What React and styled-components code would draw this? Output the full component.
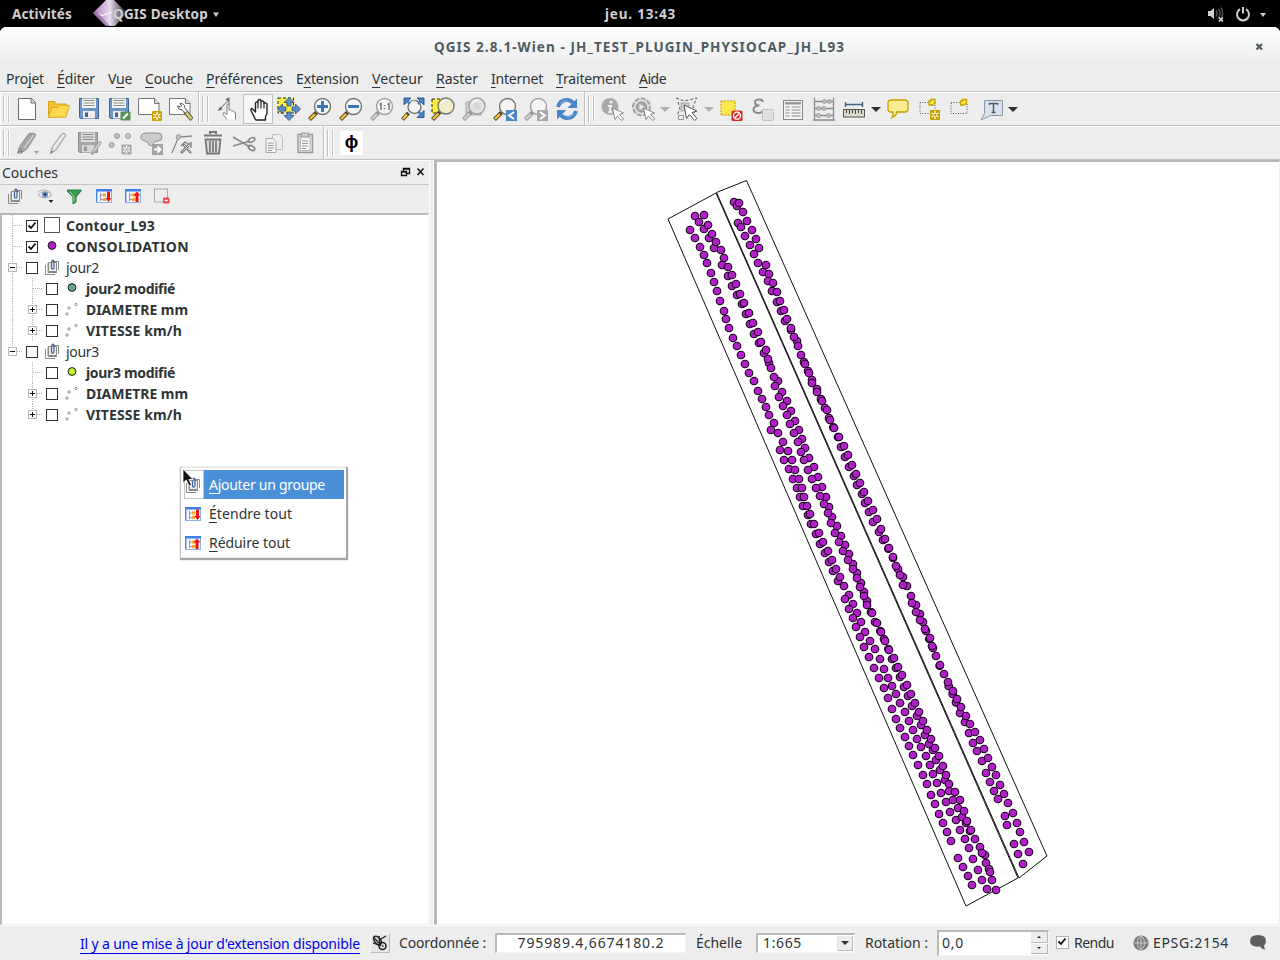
import React, { useLayoutEffect, useRef } from "react";
import styled, { createGlobalStyle } from "styled-components";

const GlobalStyle = createGlobalStyle`
  * { box-sizing: border-box; }
  body { margin: 0; background: #000; overflow: hidden; }
  svg { display: block; flex: none; }
`;

const Desktop = styled.div`
  position: relative;
  width: 1280px;
  height: 960px;
  display: flex;
  flex-direction: column;
  background: #000;
  color: #2e3436;
  font: 14px/20px "Noto Sans", "Open Sans", sans-serif;
  cursor: default;
`;

/* ---------- text ---------- */

const LabelBox = styled.span`
  display: inline-block;
  flex: none;
  justify-self: start;
  white-space: pre;
  font-weight: ${(p) => (p.$bold ? 700 : 400)};
  font-size: ${(p) => p.$size || 14}px;
`;

const Mnemonic = styled.span`
  text-decoration: underline;
  text-decoration-thickness: 1px;
  text-underline-offset: 3px;
  text-decoration-skip-ink: none;
`;

/* Text tracked to an exact width; "&" marks the mnemonic letter. */
function Label({ text, w, bold, size }) {
  const ref = useRef(null);
  useLayoutEffect(() => {
    const el = ref.current;
    el.style.letterSpacing = "0px";
    const natural = el.getBoundingClientRect().width;
    el.style.letterSpacing = `${(w - natural) / text.replace("&", "").length}px`;
  }, [text, w]);
  const i = text.indexOf("&");
  return (
    <LabelBox ref={ref} $bold={bold} $size={size}>
      {i < 0 ? text : (
        <>
          {text.slice(0, i)}
          <Mnemonic>{text[i + 1]}</Mnemonic>
          {text.slice(i + 2)}
        </>
      )}
    </LabelBox>
  );
}

/* ---------- shell top bar and window frame ---------- */

const TopBar = styled.header`
  height: 27px;
  flex: none;
  display: grid;
  grid-template-columns: 605px 1fr auto;
  align-items: center;
  color: #d0d0d0;
  padding: 0 13px 0 0;
`;
const TopLeft = styled.div`
  display: flex;
  align-items: center;
  padding-left: 12px;
  height: 27px;
`;
const AppName = styled.div`
  display: flex;
  align-items: center;
  margin-left: 20px;
  height: 27px;
`;
const AppText = styled.div`
  display: flex;
  align-items: center;
  gap: 4px;
  margin-left: -19px;
  position: relative;
`;
const TopRight = styled.div`
  display: flex;
  align-items: center;
  gap: 8px;
`;
const Win = styled.main`
  flex: 1;
  min-height: 0;
  display: flex;
  flex-direction: column;
  background: #ededed;
  border-radius: 6px 6px 0 0;
  overflow: hidden;
`;
const TitleBar = styled.div`
  height: 40px;
  flex: none;
  display: grid;
  grid-template-columns: 434px 1fr 25px;
  align-items: center;
  color: #4c5c62;
  background: linear-gradient(#fefefe, #ededed 36px);
`;
const MenuBar = styled.nav`
  height: 24px;
  flex: none;
  display: flex;
  align-items: center;
  gap: 13px;
  padding: 0 6px;
`;

/* ---------- tool bars ---------- */

const ToolRow = styled.div`
  height: 34px;
  flex: none;
  display: flex;
  border-top: 1px solid #c0c0c0;
  box-shadow: inset 0 1px #fff;
`;
const ToolGroup = styled.div`
  display: flex;
  align-items: center;
  padding: 1px ${(p) => p.$end || 0}px 0 3px;
  border-right: ${(p) => (p.$last ? "0" : "1px solid #c0c0c0")};
  box-shadow: inset 1px 1px #fff;
`;
const Grip = styled.div`
  width: 6px;
  height: 26px;
  margin-right: ${(p) => p.$gap || 2}px;
  border: solid #c2c2c2;
  border-width: 0 1px;
  box-shadow: inset 1px 0 #fff, inset -1px 0 #f8f8f8, 1px 0 #fff;
`;
const ToolButton = styled.div`
  width: ${(p) => (p.$menu ? 44 : 30.8)}px;
  height: 30px;
  display: flex;
  align-items: center;
  padding-left: 3px;
  gap: 5px;
  border: 1px solid ${(p) => (p.$on ? "#c0c0c0" : "transparent")};
  background: ${(p) => (p.$on ? "#f7f7f7" : "none")};
`;
const Arrow = styled.i`
  border: 5px solid transparent;
  border-top-color: ${(p) => (p.$off ? "#b0b0b0" : "#2b2f31")};
  border-bottom: 0;
`;
const PhiButton = styled.div`
  width: 23px;
  height: 24px;
  background: #fff;
  color: #000;
  font: 700 18px/23px "Liberation Sans", sans-serif;
  text-align: center;
`;

/* ---------- body ---------- */

const Body = styled.div`
  flex: 1;
  min-height: 0;
  display: flex;
  border-top: 1px solid #c0c0c0;
`;
const Dock = styled.section`
  width: 429px;
  display: flex;
  flex-direction: column;
  border-top: 1px solid #fff;
`;
const DockTitle = styled.div`
  height: 24px;
  flex: none;
  display: flex;
  align-items: center;
  padding: 0 3px 0 2px;
  gap: 4px;
  border-bottom: 1px solid #c4c4c4;
`;
const Spacer = styled.div`flex: 1;`;
const DockTools = styled.div`
  height: 28px;
  flex: none;
  display: flex;
  align-items: center;
  gap: 13px;
  padding: 0 7px 7px;
`;
const Tree = styled.div`
  flex: 1;
  background: #fff;
  border: 1px solid #f2f2f2;
  border-left: 2px solid #b8b8b8;
  border-top: 2px solid #b8b8b8;
`;
const TreeRow = styled.div`
  height: 21px;
  display: flex;
  align-items: center;
`;
const Branch = styled.div`
  width: 20px;
  height: 21px;
  flex: none;
`;
const Check = styled.div`
  width: 12px;
  height: 12px;
  flex: none;
  margin: 0 6px 0 4px;
  border: 1px solid #2b2f31;
  background: #fff;
`;
const Symbol = styled.div`
  width: 16px;
  height: 21px;
  display: flex;
  align-items: center;
  justify-content: center;
  margin-right: 6px;
  padding-bottom: 1px;
`;
const Splitter = styled.div`
  width: 5px;
  background: linear-gradient(90deg, #fff 1px, #ededed 1px 4px, #fff 4px);
`;
const MapFrame = styled.section`
  flex: 1;
  background: #fff;
  border: 1px solid #f0f0f0;
  border-left: 3px solid #b8b8b8;
  border-top: 2px solid #b8b8b8;
`;

/* ---------- status bar ---------- */

const StatusBar = styled.footer`
  height: 35px;
  flex: none;
  display: flex;
  align-items: center;
  padding: 0 14px 1px 80px;
  border-top: 1px solid #fff;
`;
const Link = styled.a`
  color: #0000f0;
  height: 20px;
  line-height: 19px;
  border-bottom: 1px solid #0000f0;
  margin: 2px 10px 0 0;
`;
const ToggleButton = styled.div`
  width: 20px;
  height: 20px;
  margin-right: 9px;
  background: #e4e4e4;
  border: 1px solid #fafafa;
  border-right-color: #bbb;
  border-bottom-color: #bbb;
`;
const Field = styled.div`
  width: ${(p) => p.$w}px;
  height: ${(p) => p.$h || 20}px;
  margin: 0 ${(p) => p.$mr}px 0 ${(p) => p.$ml}px;
  display: flex;
  align-items: center;
  justify-content: ${(p) => (p.$center ? "center" : "space-between")};
  padding-left: ${(p) => (p.$center ? 0 : p.$pad)}px;
  background: #fff;
  border: 2px solid #b8b8b8;
  border-right: 1px solid #f5f5f5;
  border-bottom: 1px solid #f5f5f5;
`;
const ComboKnob = styled.div`
  width: 15px;
  height: 15px;
  margin-right: 1px;
  display: flex;
  align-items: center;
  justify-content: center;
  background: #ededed;
  border: solid #b8b8b8;
  border-width: 0 1px 1px 0;
  box-shadow: -1px 0 #e0e0e0;

  ${Arrow} {
    border-width: 4px;
    border-bottom: 0;
  }
`;
const Spin = styled.div`
  width: 17px;
  height: 22px;
  display: grid;
  grid-template-rows: 1fr 1fr;
  gap: 1px;
`;
const SpinKnob = styled.div`
  display: flex;
  align-items: center;
  justify-content: center;
  background: #ededed;
  border: solid #b8b8b8;
  border-width: 0 1px 1px 0;
`;
const Tick = styled.i`
  border: 2px solid transparent;
  border-${(p) => (p.$up ? "bottom" : "top")}-color: #222;
  border-${(p) => (p.$up ? "top" : "bottom")}: 0;
`;
const StatusCheck = styled.div`
  width: 13px;
  height: 13px;
  margin-right: 5px;
  background: #fff;
  border: 1px solid #b0b0b0;
`;
const Gap = styled.div`width: ${(p) => p.$w}px; flex: none;`;

/* ---------- context menu ---------- */

const Popup = styled.div`
  position: absolute;
  left: 180px;
  top: 467px;
  width: 166px;
  height: 91px;
  padding: 2px 2px 3px 3px;
  background: #fff;
  border: 1px solid #e6e6e6;
  border-left-color: #c4c4c4;
  border-right: 0;
  box-shadow: 1px 1px 1px 1px rgba(0, 0, 0, 0.35);
`;
const PopupItem = styled.div`
  height: 29px;
  width: 160px;
  display: flex;
  align-items: center;
  color: ${(p) => (p.$on ? "#fff" : "inherit")};
`;
const PopupIcon = styled.div`
  width: 20px;
  height: 29px;
  display: flex;
  align-items: center;
  justify-content: center;
  padding-right: 2px;
  background: #fff;
  border: 1px solid ${(p) => (p.$on ? "#c4c4c4" : "transparent")};
`;
const PopupText = styled.div`
  flex: 1;
  height: 29px;
  line-height: 29px;
  padding-left: 5px;
  background: ${(p) => (p.$on ? "#4a90d9" : "none")};
`;
const Pointer = styled.svg`
  position: absolute;
  left: 182px;
  top: 468px;
`;

/* ---------- icons ---------- */

const Ico = ({ s = 24, children }) => (
  <svg width={s} height={s} viewBox={`0 0 ${s} ${s}`} fill="none">{children}</svg>
);
const Lens = ({ off, cx = 14.5, cy = 9.5, r = 8, fill = "#f4f4f2", children }) => (
  <Ico>
    {children && children[0]}
    <path d={`M${cx - 6} ${cy + 6}L1.5 22.5`} stroke={off ? "#8e8e8e" : "#4a4030"} strokeWidth="4" />
    <path d={`M${cx - 7.5} ${cy + 7.5}L2 22`} stroke={off ? "#d4d4d4" : "#fcc42c"} strokeWidth="2.4" />
    <circle cx={cx} cy={cy} r={r} fill={fill} stroke={off ? "#a0a0a0" : "#77776f"} strokeWidth="1.4" />
    <path d={`M${cx - 5} ${cy - 2}q2-4 6-4`} stroke="#fff" strokeWidth="1.2" />
    {children && children[1]}
  </Ico>
);
const Page = () => <path d="M3.500 1.500h13l4 4v17h-17z" fill="#fff" stroke="#6a6a6a" />;
const Star = ({ x, y, off }) => (
  <g transform={`translate(${x} ${y})`}>
    <rect width="10" height="10" rx="1" fill={off ? "#a8a8a8" : "#c9a100"} />
    <path d="M5 1v8M1.500 3l7 4M8.500 3l-7 4" stroke="#fff" strokeWidth="1.4" />
    <circle cx="5" cy="5" r="1.300" fill={off ? "#a8a8a8" : "#c9a100"} />
  </g>
);
const Disk = ({ off }) => (
  <g>
    <path d="M2.500 1.500h19v20h-18l-1-1z" fill={off ? "#a8a8a8" : "#6c96c8"} stroke={off ? "#8f8f8f" : "#3d6496"} />
    <rect x="5" y="1.500" width="14" height="9.500" fill={off ? "#ddd" : "#f6f6f3"} />
    <path d="M6.500 3.500h11M6.500 6h11M6.500 8.500h11" stroke="#8c8c88" />
    <rect x="6" y="14" width="12" height="7.500" fill={off ? "#d5d5d5" : "#eee"} />
    <rect x="8" y="15.500" width="3" height="4.500" fill={off ? "#999" : "#3d6496"} />
  </g>
);
const HAND = "M7.500 22L3.500 14Q2 11.500 4 11L7.500 14.500V5.500Q8.500 3.500 10 5V3Q11.500 1 13 3V4Q14.500 2.500 16 4.500V6Q17.500 4.500 19 6.500V16L17.500 19V22.500H8z";
const Cursor = ({ x, y }) => (
  <path transform={`translate(${x} ${y})`} d="M0 0l11 5-4 1.500 4 4.500-2 1.500-4-4.500-2.500 3.500z" fill="#fff" stroke="#8a8a8a" strokeLinejoin="round" />
);
const Pencil = ({ x = 0, y = 0, k = 1, fill = "#ccc" }) => (
  <g transform={`translate(${x} ${y}) scale(${k})`}>
    <path d="M5.500 22.500l2-7L17 2.500q2-1.500 4 1.500L11.500 18.500z" fill={fill} stroke="#969696" strokeLinejoin="round" />
    <path d="M9 17L18.500 4" stroke="#fff" opacity=".7" />
    <path d="M5.500 22.500l1-3 1.800 1.500z" fill="#777" />
  </g>
);
const Circ = ({ p, r = 2.5 }) => p.map(([x, y]) => <circle key={x + "," + y} cx={x} cy={y} r={r} fill="#c4c4c4" stroke="#999" />);

const I = {
  new: <Ico><Page /><path d="M16 1.500v4.500h4.500" fill="#ddd" stroke="#6a6a6a" /></Ico>,
  open: <Ico><path d="M2.500 21V4.500h6l2 2.500h10V11" fill="#f3c22f" stroke="#d1a11e" /><path d="M2 20.500L6 10.500h6l2-2.500 9.500.5L20 20z" fill="#fcd94f" stroke="#d9ab25" strokeLinejoin="round" /></Ico>,
  save: <Ico><Disk /></Ico>,
  saveAs: <Ico><Disk /><rect x="13.500" y="14.500" width="10" height="9" rx="1" fill="#569353" /><path d="M16 21.500l5-5" stroke="#fff" strokeWidth="2" /></Ico>,
  composer: <Ico><path d="M.5 1.500h16l4.500 4.500V17.500H.5z" fill="#fff" stroke="#777" /><path d="M16.500 1.500v5h5" fill="#ddd" stroke="#777" /><Star x={14} y={14} /></Ico>,
  manager: <Ico><path d="M.5 1.500h16l4.500 4.500V17.500H.5z" fill="#fff" stroke="#777" /><path d="M16.500 1.500v5h5" fill="#ddd" stroke="#777" /><path d="M16 14l7 8.500" stroke="#5a5433" strokeWidth="4.500" /><path d="M16.500 14.500l6 7.500" stroke="#e3d37a" strokeWidth="2.500" /><path d="M11 6.500q5 0 4.500 4l3 4-2 1.500-3.500-3q-4 0-4.500-4l3 1 1-1z" fill="#fff" stroke="#555" /></Ico>,
  touch: <Ico><path d="M11 22.500L7.500 18Q6 15.500 8 15.500L11 17.500V7.500Q12 6 13 7.500V13Q14.500 12 15.500 14 17 13 18 15 19.500 14.500 19.500 17V22.500" fill="#fff" stroke="#808080" strokeLinejoin="round" /><path d="M4 12L12 3.500M13 8V2" stroke="#666" /><path d="M1.500 14l3-4.500 1.800 3zM13.500 0l-4 2.500 3.300 2z" fill="#666" /></Ico>,
  pan: <Ico><g transform="translate(1 .5)"><path d={HAND} fill="#fff" stroke="#222" strokeWidth="1.400" strokeLinejoin="round" /><path d="M10 5V11M13 4V11M16 5V11" stroke="#222" strokeWidth="1.200" /></g></Ico>,
  panSel: <Ico><rect x="1" y="1" width="15.500" height="15" fill="#fdef3c" stroke="#222" strokeDasharray="3 2" /><path d="M12 .5l5 5h-3v3.500h-4V5.500H7zM12 23.500l5-5h-3V15h-4v3.500H7zM.5 12l5-5v3H9v4H5.500v3zM23.500 12l-5-5v3H15v4h3.500v3z" fill="#5b8ecb" stroke="#2c4f86" strokeWidth=".8" /></Ico>,
  zin: <Lens>{[null, <path key="p" d="M14.500 4v11M9 9.500h11" stroke="#3d76b8" strokeWidth="3" />]}</Lens>,
  zout: <Lens>{[null, <path key="p" d="M9 9.500h11" stroke="#3d76b8" strokeWidth="3" />]}</Lens>,
  z11: <Lens off>{[null, <path key="p" d="M9.500 7.500l1.500-1v6.500M17.500 7.500l1.500-1v6.500M14.500 8v1.200M14.500 11v1.200" stroke="#777" strokeWidth="1.500" />]}</Lens>,
  zfull: <Lens cx={13.5} cy={10} r={6.5}>{[<path key="a" d="M3 1h7L3 8zM23 1h-7l7 7zM23 20.500h-7l7-7z" fill="#4b81bd" stroke="#2e5c94" />, <path key="b" d="M5 3l4 4M21 3l-4 4M21 18.500l-4-4" stroke="#4b81bd" strokeWidth="2.500" />]}</Lens>,
  zsel: <Lens cx={15} cy={9} fill="#f0ecc8">{[<rect key="a" x="1" y="2" width="15" height="14" fill="#fdef3c" stroke="#222" strokeDasharray="3 2" />, null]}</Lens>,
  zlay: <Lens off cx={15} cy={9} fill="#e4e4e4">{[<path key="a" d="M4 5h15v13H4z" fill="#d0d0d0" stroke="#aaa" />, <path key="b" d="M11 6h8v7h-8z" fill="#d8d8d8" />]}</Lens>,
  zlast: <Lens>{[null, <g key="p"><rect x="13" y="13" width="11" height="11" fill="#4b86c3" /><path d="M21 15l-5 3.500 5 3.500" stroke="#fff" strokeWidth="2" /></g>]}</Lens>,
  znext: <Lens off>{[null, <g key="p"><rect x="13" y="13" width="11" height="11" fill="#a8a8a8" /><path d="M16 15l5 3.500-5 3.500" stroke="#fff" strokeWidth="2" /></g>]}</Lens>,
  refresh: <Ico><path d="M3 10Q5 3 12 3q4 0 6 3" stroke="#4a86c8" strokeWidth="4" /><path d="M22 1.500v9.500h-9.500z" fill="#4a86c8" /><path d="M21 14q-2 7-9 7-4 0-6-3" stroke="#4a86c8" strokeWidth="4" /><path d="M2 22.500V13h9.500z" fill="#4a86c8" /><path d="M5 7q3-4 8-3M19 17q-3 4-8 3" stroke="#85b2e2" /></Ico>,
  info: <Ico><circle cx="10" cy="9.500" r="8.500" fill="#a9a9a9" /><circle cx="11" cy="5" r="1.600" fill="#eee" /><path d="M8 9h3l-1.500 6h3" stroke="#eee" strokeWidth="2" /><Cursor x={12.5} y={11} /></Ico>,
  action: <Ico><circle cx="10.500" cy="10" r="8.500" fill="#ddd" stroke="#a4a4a4" strokeWidth="2" strokeDasharray="5 1.500" /><circle cx="10.500" cy="10" r="5" fill="#aaa" stroke="#8a8a8a" /><path d="M8.500 7v6l5-3z" fill="#eee" /><Cursor x={12.5} y={11} /></Ico>,
  select: <Ico><path d="M1 1l8 3 13-3-4 8 2 9M3 5l2 6-3 8" stroke="#555" strokeDasharray="3 2" /><rect x="6" y="6" width="8" height="8" fill="#ccc" stroke="#aaa" /><rect x="3.500" y="18.500" width="5" height="4" stroke="#999" /><path transform="translate(9 8)" d="M0 0l13 6-5 1.500 5 6-2.500 2-5-6-3 4z" fill="#fff" stroke="#555" strokeLinejoin="round" /></Ico>,
  deselect: <Ico><rect x="2" y="4" width="14" height="14" fill="#fce94f" stroke="#c4a000" strokeDasharray="2 1" /><rect x="12.500" y="13.500" width="11" height="10.500" rx="1.500" fill="#d92a2a" /><circle cx="18" cy="18.700" r="3.500" stroke="#fff" strokeWidth="1.300" /><path d="M15.800 21l4.500-4.500" stroke="#fff" strokeWidth="1.300" /></Ico>,
  expr: <Ico><path d="M13 5Q12 2 8.500 2.500 4.500 3 5 6q.5 2.500 4.500 2.500Q3.500 9 3.500 12.500 4 16 8.500 16q4 0 4.500-3" stroke="#8c8c8c" strokeWidth="2" /><rect x="12.500" y="12.500" width="11" height="11" rx="1" fill="#e0e0e0" stroke="#b0b0b0" strokeDasharray="2 1" /></Ico>,
  table: <Ico><rect x="2.500" y="3.500" width="19" height="19" fill="#f4f4f4" stroke="#868686" /><rect x="4" y="5" width="16" height="2.500" fill="#999" /><path d="M4.500 10h4M10.500 10h9M4.500 13h4M10.500 13h9M4.500 16h4M10.500 16h9M4.500 19h4M10.500 19h9" stroke="#8c8c8c" strokeWidth="1.200" /></Ico>,
  abacus: <Ico><path d="M2.500 1v22M21.500 1v22M1 23h22M2 4.500h20M2 11.500h20M2 18.500h20" stroke="#8a8a8a" strokeWidth="1.300" /><Circ r={1.9} p={[[12.500, 4.500], [17.500, 4.500], [6.500, 11.500], [12, 11.500], [6.500, 18.500], [16.500, 18.500]]} /></Ico>,
  measure: <Ico><path d="M3.500 7.500h17M3.500 5v5M20.500 5v5" stroke="#3d6488" strokeWidth="1.500" /><rect x="1.500" y="12.500" width="21" height="7.500" fill="#d9d9cc" stroke="#55554f" /><path d="M4.500 13v3M7.500 13v4M10.500 13v3M13.500 13v4M16.500 13v3M19.500 13v4" stroke="#444" /></Ico>,
  tips: <Ico><path d="M5 3h14q3 0 3 3v6q0 3-3 3h-8q-1 4-5 5.500 1.500-2 1-5.500H5q-3 0-3-3V6q0-3 3-3z" fill="#faec90" stroke="#c4a000" strokeWidth="1.300" /></Ico>,
  bookNew: <Ico><path d="M3 5.500h15v11H3z" stroke="#555" strokeDasharray="1 1.500" /><path d="M12 4h2V2.500h4V6l-2.500 2H12z" fill="#fce94f" stroke="#c4a000" strokeWidth="1.300" /><Star x={13} y={13} /></Ico>,
  book: <Ico><path d="M3 5.500h16v11H3z" stroke="#555" strokeDasharray="1 1.500" /><path d="M12.500 4h2V2.500h4V6L16 8h-3.500z" fill="#fce94f" stroke="#c4a000" strokeWidth="1.300" /></Ico>,
  text: <Ico><path d="M5.500 3.500h18v15h-12L2 23l3.500-6.500z" fill="#d9e3ee" stroke="#8696a6" /><path d="M10.500 8V6.500h8V8M14.500 6.500v9M12.500 15.500h4" stroke="#4b5a68" strokeWidth="1.500" /></Ico>,
  edits: <Ico><Pencil x={-4} fill="#999" /><Pencil x={-1} fill="#aaa" /><path d="M18 20h5l-2.500 3z" fill="#999" /></Ico>,
  edit: <Ico><Pencil x={-2} fill="#ddd" /></Ico>,
  saveEd: <Ico><g transform="translate(-2 0)"><Disk off /></g><Pencil x={10} y={9} k={0.65} fill="#bbb" /></Ico>,
  addPt: <Ico><Circ p={[[9, 5], [20, 5], [3.500, 14]]} /><Star off x={13.500} y={13.500} /></Ico>,
  move: <Ico><path d="M7 2h12q4 0 4 4t-4 4q-4 0-5 3t-4 1q0-3-4-4-5-1-4-5 1-3 5-3z" fill="#ccc" stroke="#8c8c8c" /><rect x="13" y="13" width="11" height="11" fill="#a3a3a3" /><path d="M15 18.500h6M18.500 15.500l3 3-3 3" stroke="#fff" strokeWidth="2" /></Ico>,
  node: <Ico><path d="M2 22L8.500 6 22 5" stroke="#888" strokeWidth="1.300" /><Circ r={2.3} p={[[8.500, 6]]} /><path d="M11 22l8-8M13 13l8 9" stroke="#777" strokeWidth="2.600" /><path d="M11 15l4-4 3 2M17 14l4-2v5" stroke="#888" strokeWidth="1.500" /><path d="M12 21l7-7M14 14l7 7.500" stroke="#d8d8d8" /></Ico>,
  trash: <Ico><path d="M9 3V1h6v2M3 4.500h18" stroke="#777" strokeWidth="2" /><path d="M4.500 8.500h15l-1.500 14H6z" fill="#ddd" stroke="#777" strokeWidth="1.800" /><path d="M9 10v11M12 10v11M15 10v11" stroke="#777" strokeWidth="1.700" /></Ico>,
  cut: <Ico><path d="M1 6l17 10M1 15l17-5" stroke="#8a8a8a" strokeWidth="1.600" /><ellipse cx="19.500" cy="9" rx="3.500" ry="2" transform="rotate(-25 19.500 9)" stroke="#8a8a8a" strokeWidth="1.600" /><ellipse cx="19.500" cy="17" rx="3.500" ry="2" transform="rotate(30 19.500 17)" stroke="#8a8a8a" strokeWidth="1.600" /></Ico>,
  copy: <Ico><path d="M10.500 3.500h7l3 3v12h-10z" fill="#eee" stroke="#bbb" /><path d="M4 7.500h7l3 3v11H4z" fill="#f4f4f4" stroke="#aaa" /><path d="M6 12h6M6 14.500h6M6 17h6M6 19.500h4" stroke="#999" /></Ico>,
  paste: <Ico><path d="M5 3.500h14.500v18H5z" fill="#ddd" stroke="#999" strokeWidth="1.400" /><path d="M7.500 5.500h9.500v14H7.500z" fill="#f6f6f6" stroke="#bbb" /><rect x="8.500" y="2" width="7" height="4" fill="#ccc" stroke="#999" /><path d="M9 10h6M9 12.500h6M9 15h6M9 17.500h4" stroke="#999" /></Ico>,
};

const Group = () => (
  <Ico s={16}>
    <path d="M1.500 6v9.500H11M4 4v9.500h9" stroke="#8a8a84" />
    <path d="M4.500 3.500h8v9h-8z" fill="#eee" stroke="#8a8a84" />
    <path d="M7 2.500h7.500V11" stroke="#8a8a84" />
    <path d="M7.500 4v5q1 2.500 2.500 0V2.500Q9 0 7.800 2" stroke="#3c5f9a" strokeWidth="1.200" />
  </Ico>
);
const Fold = ({ up }) => (
  <Ico s={16}>
    <rect x=".5" y="1.500" width="15" height="13" fill="#f2f6fd" stroke="#8fb2e8" />
    <path d="M0 1h16v2.500H0z" fill="#3f7ee8" />
    <path d="M.7 2v12" stroke="#4a86e8" strokeWidth="1.400" />
    <path d="M4.500 5v8M5 7h2M5 11.500h2" stroke="#999" />
    <rect x="7" y="5.500" width="3" height="3" fill="#ffa22b" />
    <rect x="7" y="10" width="3" height="3" fill="#ffa22b" />
    <path d={up ? "M12 3.500l3.500 4h-2v6.500h-3V7.500h-2z" : "M12.500 14L15.500 10h-1.500V3.500h-3V10H9.500z"} fill="#f01010" />
  </Ico>
);
const Eye = () => (
  <Ico s={18}>
    <path d="M2 8q7-7 14 0-7 6-14 0z" fill="#eef2f6" stroke="#a4a8ac" />
    <path d="M2 5q7-5 13 1" stroke="#b4b4b4" />
    <circle cx="9" cy="7.500" r="3" fill="#6a93c2" />
    <circle cx="9" cy="7.500" r="1.300" fill="#1c3556" />
    <path d="M12.500 13h5L15 16z" fill="#222" />
  </Ico>
);
const Funnel = () => (
  <Ico s={16}>
    <path d="M0 2h14v1L9 9v5l-3 2V9L0 3z" fill="#3b9c50" stroke="#217a35" />
    <path d="M3 4l4 5v5" stroke="#9bdba6" />
  </Ico>
);
const RemoveLayer = () => (
  <Ico s={17}>
    <rect x=".5" y="2" width="13" height="13" stroke="#a8a8a0" />
    <rect x="9" y="10.500" width="6.500" height="6" rx="1" fill="#f04848" />
    <path d="M10.500 13.500h3.500" stroke="#fff" strokeWidth="1.300" />
  </Ico>
);
const Tickmark = () => <svg width="10" height="10" viewBox="0 0 10 10"><path d="M1.500 4.500L4 7l4.500-5.500" stroke="#111" strokeWidth="1.800" fill="none" /></svg>;

/* ---------- layer tree ---------- */

const LAYERS = [
  { t: "Contour_L93", w: 89, sym: "square", on: true, bold: true, lvl: 0, box: "" },
  { t: "CONSOLIDATION", w: 123, sym: "#b01fc7", on: true, bold: true, lvl: 0, box: "" },
  { t: "jour2", w: 33, sym: "group", lvl: 0, box: "-" },
  { t: "jour2 modifié", w: 89, sym: "#5fa883", bold: true, lvl: 1, box: "" },
  { t: "DIAMETRE mm", w: 102, sym: "points", bold: true, lvl: 1, box: "+" },
  { t: "VITESSE km/h", w: 96, sym: "points", bold: true, lvl: 1, box: "+" },
  { t: "jour3", w: 33, sym: "group", lvl: 0, box: "-", end: true },
  { t: "jour3 modifié", w: 89, sym: "#c5f02c", bold: true, lvl: 1, box: "", end: true },
  { t: "DIAMETRE mm", w: 102, sym: "points", bold: true, lvl: 1, box: "+", end: true },
  { t: "VITESSE km/h", w: 96, sym: "points", bold: true, lvl: 1, box: "+", end: true, last: true },
];

function Lines({ vertical, tail, box, stub }) {
  const x = 10.5;
  return (
    <Branch>
      <svg width="20" height="21" fill="none" stroke="#b4b4b4">
        {vertical && <path d={`M${x} 0V${tail ? 11 : 21}`} strokeDasharray="1 1" />}
        {stub && <path d="M11 10.500h9" strokeDasharray="1 1" />}
        {box && <rect x={x - 4} y="6.500" width="8" height="8" fill="#fff" stroke="#b8b8b8" />}
        {box && <path d={box === "+" ? "M8 10.500h5M10.500 8v5" : "M8 10.500h5"} stroke="#111" />}
      </svg>
    </Branch>
  );
}

function SymbolIcon({ sym }) {
  if (sym === "group") return <Group />;
  if (sym === "square") return <Ico s={16}><rect x=".5" y=".5" width="15" height="15" fill="#fff" stroke="#555" /></Ico>;
  if (sym === "points")
    return <Ico s={16}><g stroke="#888" strokeWidth=".9"><circle cx="5" cy="7" r="1.200" /><circle cx="12" cy="3.500" r="1.200" /><circle cx="3" cy="13" r="1.200" /></g></Ico>;
  return <Ico s={16}><circle cx="8" cy="7.500" r="3.900" fill={sym} stroke="#1c1c1c" /></Ico>;
}

function Layer({ l }) {
  return (
    <TreeRow>
      {l.lvl === 0
        ? <Lines vertical stub box={l.box} tail={l.end} />
        : <><Lines vertical={!l.end} /><Lines vertical stub box={l.box} tail={l.last || false} /></>}
      <Check>{l.on && <Tickmark />}</Check>
      <Symbol><SymbolIcon sym={l.sym} /></Symbol>
      <Label text={l.t} w={l.w} bold={l.bold} />
    </TreeRow>
  );
}

/* ---------- map ---------- */

/* Sample points, in thirds of a pixel from each block's origin. */
const BLOCKS = [
  { x: 650, y: 170, pts: "120,180 135,204 150,231 162,255 171,279 183,309 192,336 201,363 210,393 222,423 228,447 237,474 249,504 261,528 273,555 285,582 297,609 312,633 324,663 336,687 348,711 357,735 135,138 162,135 147,156 162,177 174,165 177,204 186,192 192,234 198,216 213,240 222,264 216,285 234,291 234,318 246,315 246,348 258,342 261,375 270,372 276,402 282,399 288,432 297,429 300,462 309,459 312,492 324,486 327,519 333,516 342,549 348,540 357,579 354,567 363,594 384,633 372,621 375,648 396,666 387,681 411,693 399,708 423,723 411,735 252,96 261,108 267,99 279,126 264,159 291,153 273,171 306,180 285,198 318,207 300,225 327,234 312,252 324,279 348,285 339,306 357,312 354,333 369,339 366,363 381,366 381,396 390,393 393,423 402,420 405,453 411,447 423,480 423,474 441,513 432,501 444,528 453,555 462,576 465,582 474,603 477,609 486,630 486,639 501,657 501,666 513,687 516,693 525,714 531,720 537,744 540,750" },
  { x: 750, y: 420, pts: "72,9 63,30 84,39 99,66 90,90 114,93 102,120 126,120 117,147 135,150 129,177 147,177 141,204 156,204 150,231 162,231 159,258 171,258 174,285 180,282 183,312 192,312 198,342 207,339 210,372 219,366 225,399 234,393 237,426 246,420 249,453 258,447 264,483 270,471 282,498 297,525 285,537 309,552 297,567 321,579 309,594 333,606 318,621 345,636 330,651 360,663 342,681 375,687 357,711 390,717 372,744 402,747 387,774 414,774 135,3 120,12 147,30 132,39 156,57 144,66 165,84 153,96 177,114 162,120 192,141 174,150 204,171 186,177 216,201 198,204 228,231 210,228 237,261 222,252 246,291 234,279 261,318 243,309 273,348 255,339 285,375 267,366 297,402 279,393 309,432 294,420 321,459 309,447 333,489 321,474 342,516 330,501 351,543 342,528 351,555 363,576 366,579 375,606 381,609 391,633 393,636 402,657 405,663 415,687 417,690 426,717 432,714 438,744 444,741 450,771 456,765 250,22 252,24 264,51 267,51 273,81 282,78 285,111 294,105 297,141 306,135 312,168 318,162 321,195 330,189 336,222 342,216 345,249 354,243 357,276 369,270 369,306 381,297 387,336 393,327 399,360 405,357 415,386 417,384 429,414 429,411 444,447 438,438 459,471 450,465 471,498 459,495 483,528 498,555 486,549 510,582 498,576 519,606 510,600 528,633 525,627 538,657 540,654 549,684 546,678 558,708 569,737 570,735 582,762" },
  { x: 840, y: 670, pts: "132,54 156,48 144,84 168,72 156,117 180,99 168,147 195,126 180,174 207,153 195,201 219,180 207,228 231,207 219,255 243,231 234,285 258,258 249,315 270,285 261,342 279,312 273,375 291,339 285,402 303,369 297,432 318,396 309,459 330,426 321,486 348,450 333,513 360,480 354,564 375,507 369,591 387,534 384,618 399,567 396,645 414,600 426,630 441,657 192,51 201,45 204,78 213,72 216,108 225,99 231,138 237,126 243,165 249,153 255,195 261,180 267,222 273,207 279,240 285,234 288,270 297,258 300,300 309,288 315,330 318,315 327,363 327,342 345,366 339,390 360,390 354,414 366,441 372,423 378,459 381,453 390,483 393,480 405,507 420,531 435,555 426,549 438,579 447,597 450,606 456,630 468,660 326,48 324,36 338,72 339,63 348,97 351,87 360,129 363,111 375,156 378,138 390,162 387,189 405,186 399,219 420,210 411,243 432,237 426,273 444,264 456,291 438,309 468,315 450,336 480,345 462,363 492,372 474,387 504,399 519,429 495,438 531,459 501,465 540,486 552,516 522,522 567,546 534,552 549,582" },
];

function Plot() {
  return (
    <svg width="840" height="758" viewBox="437 162 840 758">
      <g fill="none" stroke="#111">
        <path d="M668 219L716 193L1018 878L966 906Z" />
        <path d="M716.500 192.500L746.500 180.500L1047 856L1019 878Z" />
      </g>
      <g fill="#b01fc7" stroke="#140018" strokeWidth="1.100">
        {BLOCKS.flatMap((b) =>
          b.pts.split(" ").map((p, i) => {
            const [x, y] = p.split(",").map(Number);
            return <circle key={`${b.x}-${i}`} cx={b.x + x / 3} cy={b.y + y / 3} r="3.800" />;
          })
        )}
      </g>
    </svg>
  );
}

/* ---------- page ---------- */

const MENUS = [["Pro&jet", 38], ["&Éditer", 38], ["V&ue", 24], ["&Couche", 48], ["&Préférences", 77], ["E&xtension", 63], ["&Vecteur", 51], ["&Raster", 42], ["&Internet", 52], ["&Traitement", 70], ["&Aide", 27]];

const Tools = ({ names }) =>
  names.map((n) => {
    const [id, flag] = n.split(":");
    return (
      <ToolButton key={id} $on={flag === "on"} $menu={flag === "menu" || flag === "off"}>
        {I[id]}
        {(flag === "menu" || flag === "off") && <Arrow $off={flag === "off"} />}
      </ToolButton>
    );
  });

export default function App() {
  return (
    <Desktop>
      <GlobalStyle />
      <TopBar>
        <TopLeft>
          <Label text="Activités" w={60} bold size={13.5} />
          <AppName>
            <svg width="40" height="27" viewBox="0 0 40 27">
              <defs>
                <linearGradient id="gem" x1="0" x2="1">
                  <stop offset="0" stopColor="#a878b8" />
                  <stop offset=".5" stopColor="#e6dcee" />
                  <stop offset="1" stopColor="#221a2a" />
                </linearGradient>
              </defs>
              <path d="M1 13L14 0h8l13 13-12 13h-9z" fill="url(#gem)" />
              <path d="M5 15l3-1 2 2 3-2 2 1 3-3 2 1" stroke="#fff" fill="none" />
              <path d="M1 13l13 13h4L5 12z" fill="#8e5c9f" opacity=".6" />
            </svg>
            <AppText>
              <Label text="QGIS Desktop" w={95} bold size={13.5} />
              <svg width="8" height="7"><path d="M1 2.500h6L4 7z" fill="#d0d0d0" /></svg>
            </AppText>
          </AppName>
        </TopLeft>
        <Label text="jeu. 13:43" w={71} bold size={13.5} />
        <TopRight>
          <svg width="20" height="17" viewBox="0 0 20 17" fill="none">
            <path d="M1 6h2.500L7 3v11l-3.500-3H1z" fill="#d0d0d0" />
            <path d="M9 5.500q2 3 0 6M11.500 4q3 4.500 0 9M14 2.500q3 6 0 12" stroke="#555" strokeWidth="1.400" />
            <path d="M12 12.500l4 4M16 12.500l-4 4" stroke="#ddd" strokeWidth="1.600" />
          </svg>
          <svg width="16" height="16" viewBox="0 0 16 16" fill="none" stroke="#d0d0d0" strokeWidth="2">
            <path d="M5 3.200a6 6 0 1 0 6 0M8 1v6.500" />
          </svg>
          <svg width="8" height="7"><path d="M1 3h6L4 7z" fill="#d0d0d0" /></svg>
        </TopRight>
      </TopBar>

      <Win>
        <TitleBar>
          <span />
          <Label text="QGIS 2.8.1-Wien - JH_TEST_PLUGIN_PHYSIOCAP_JH_L93" w={411} bold size={13.5} />
          <svg width="9" height="9" viewBox="0 0 9 9"><path d="M1.500 1l5.500 5.500M7 1L1.500 6.500" stroke="#4c5c62" strokeWidth="2.200" /></svg>
        </TitleBar>
        <MenuBar>
          {MENUS.map(([t, w]) => <Label key={t} text={t} w={w} />)}
        </MenuBar>

        <ToolRow>
          <ToolGroup $end={2}>
            <Grip />
            <Tools names={["new", "open", "save", "saveAs", "composer", "manager"]} />
          </ToolGroup>
          <ToolGroup $end={3}>
            <Grip $gap={4} />
            <Tools names={["touch", "pan:on", "panSel", "zin", "zout", "z11", "zfull", "zsel", "zlay", "zlast", "znext", "refresh"]} />
          </ToolGroup>
          <ToolGroup $last>
            <Grip />
            <Tools names={["info", "action:off", "select:off", "deselect", "expr", "table", "abacus", "measure:menu", "tips", "bookNew", "book", "text:menu"]} />
          </ToolGroup>
        </ToolRow>
        <ToolRow>
          <ToolGroup $end={3}>
            <Grip $gap={3} />
            <Tools names={["edits", "edit", "saveEd", "addPt", "move", "node", "trash", "cut", "copy", "paste"]} />
          </ToolGroup>
          <ToolGroup $last>
            <Grip $gap={7} />
            <PhiButton>ɸ</PhiButton>
          </ToolGroup>
        </ToolRow>

        <Body>
          <Dock>
            <DockTitle>
              <Label text="Couches" w={56} />
              <Spacer />
              <svg width="11" height="11" viewBox="0 0 11 11" fill="none" stroke="#111"><path d="M3.500 4V1.500h6v5H7M3 2h7" strokeWidth="1.300" /><path d="M1.500 4.500h5v4h-5zM1 5h6" strokeWidth="1.300" /></svg>
              <svg width="11" height="11" viewBox="0 0 11 11"><path d="M2.500 1.500l6 6.500M8.500 1.500L2.500 8" stroke="#111" strokeWidth="1.500" /></svg>
            </DockTitle>
            <DockTools>
              <Group /><Eye /><Funnel /><Fold /><Fold up /><RemoveLayer />
            </DockTools>
            <Tree>
              {LAYERS.map((l, i) => <Layer key={i} l={l} />)}
            </Tree>
          </Dock>
          <Splitter />
          <MapFrame><Plot /></MapFrame>
        </Body>

        <StatusBar>
          <Link><Label text="Il y a une mise à jour d'extension disponible" w={280} /></Link>
          <ToggleButton>
            <svg width="18" height="18" viewBox="0 0 18 18" fill="none" stroke="#222">
              <ellipse cx="6.500" cy="6.500" rx="3" ry="5" transform="rotate(-40 6.500 6.500)" fill="#ccc" strokeWidth="1.500" />
              <circle cx="11.500" cy="12" r="3.500" strokeWidth="1.500" />
              <path d="M3 4l6 6M8 2l1 8M2 9l8 3M10 5l5-3M11 12h1.500" strokeWidth="1.300" />
            </svg>
          </ToggleButton>
          <Label text="Coordonnée :" w={87} />
          <Field $w={191} $ml={9} $mr={10} $center><Label text="795989.4,6674180.2" w={147} /></Field>
          <Label text="Échelle" w={46} />
          <Field $w={99} $ml={14} $mr={10} $pad={5}>
            <Label text="1:665" w={39} />
            <ComboKnob><Arrow /></ComboKnob>
          </Field>
          <Label text="Rotation :" w={63} />
          <Field $w={112} $h={26} $ml={9} $mr={7} $pad={3}>
            <Label text="0,0" w={22} />
            <Spin><SpinKnob><Tick $up /></SpinKnob><SpinKnob><Tick /></SpinKnob></Spin>
          </Field>
          <StatusCheck><Tickmark /></StatusCheck>
          <Label text="Rendu" w={40} />
          <Gap $w={19} />
          <svg width="16" height="16" viewBox="0 0 16 16" fill="#808080" stroke="#777">
            <circle cx="8" cy="8" r="7" strokeWidth="1.200" />
            <g fill="none" stroke="#c8c8c8"><ellipse cx="8" cy="8" rx="3.500" ry="6.500" /><path d="M1.500 8h13M8 1.500v13" /></g>
          </svg>
          <Gap $w={4} />
          <Label text="EPSG:2154" w={76} />
          <Spacer />
          <svg width="16" height="15" viewBox="0 0 16 15"><path d="M8 0q8 0 8 6 0 3-2 4.500 0 2.500 1.500 4-3.500 0-5.500-3Q0 12.500 0 6 0 0 8 0z" fill="#5e5e5e" /></svg>
        </StatusBar>
      </Win>

      <Popup>
        <PopupItem $on><PopupIcon $on><Group /></PopupIcon><PopupText $on><Label text="&Ajouter un groupe" w={116} /></PopupText></PopupItem>
        <PopupItem><PopupIcon><Fold /></PopupIcon><PopupText><Label text="&Étendre tout" w={83} /></PopupText></PopupItem>
        <PopupItem><PopupIcon><Fold up /></PopupIcon><PopupText><Label text="&Réduire tout" w={81} /></PopupText></PopupItem>
      </Popup>
      <Pointer width="12" height="19" viewBox="0 0 12 19"><path d="M1 1v14l3.300-3 2.700 6 2.500-1-2.600-5.500H11z" fill="#111" stroke="#fff" strokeWidth=".8" /></Pointer>
    </Desktop>
  );
}
